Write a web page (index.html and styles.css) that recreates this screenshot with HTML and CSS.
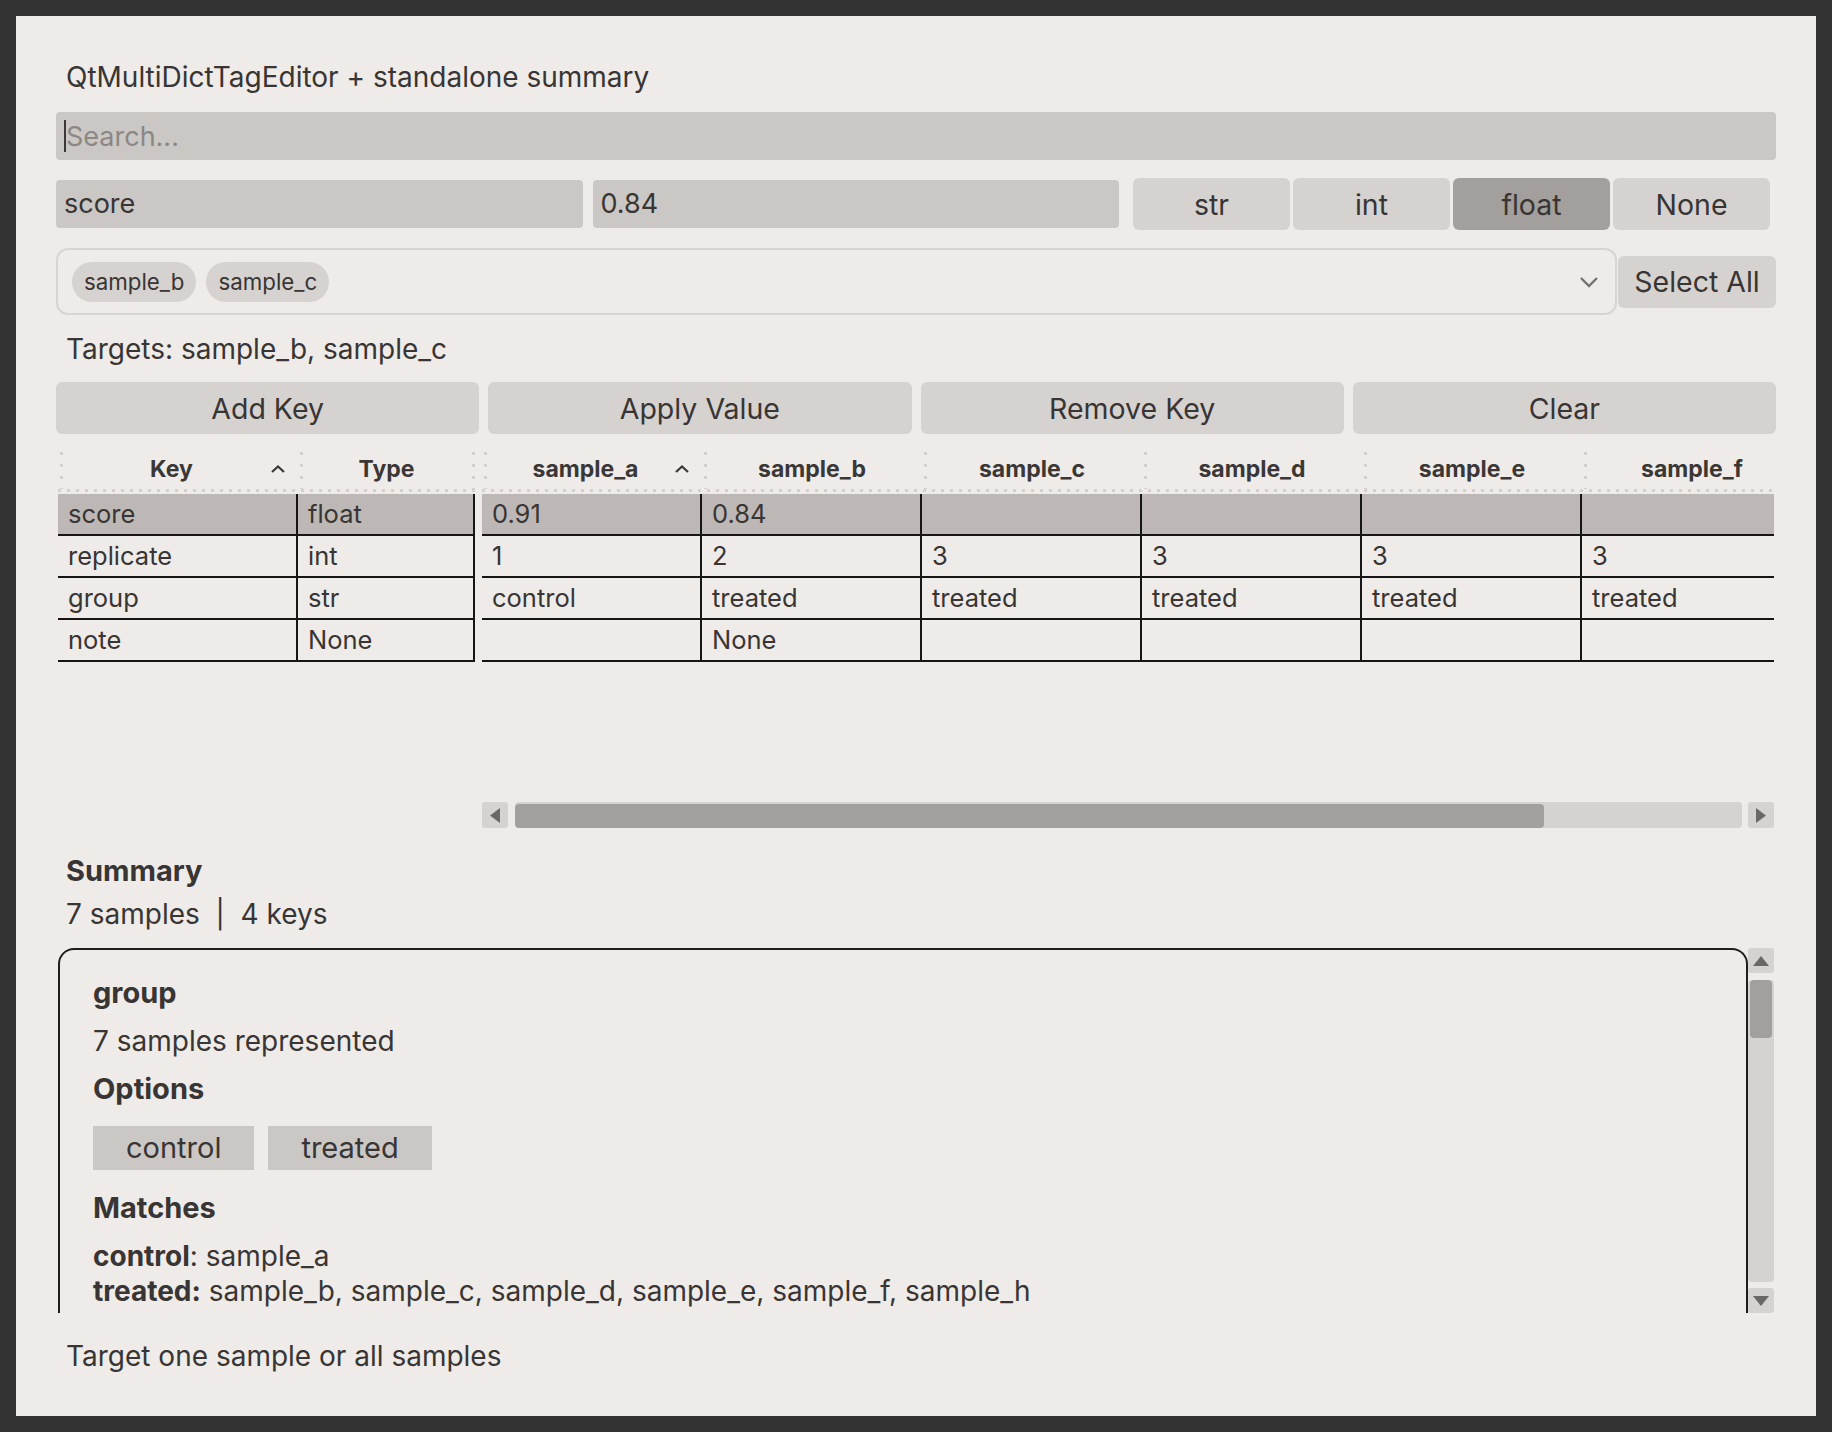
FILE: index.html
```html
<!DOCTYPE html>
<html lang="en">
<head>
    <meta charset="UTF-8">
    <title>QtMultiDictTagEditor</title>
    <link rel="stylesheet" href="styles.css">
</head>
<body>

<div class="window">

    <h1 class="title">QtMultiDictTagEditor + standalone summary</h1>

    <div class="search"><span class="caret"></span><span class="placeholder">Search...</span></div>

    <div class="edit-row">
        <div class="field">score</div>
        <div class="field">0.84</div>
        <div class="type-group">
            <button class="type-btn">str</button>
            <button class="type-btn">int</button>
            <button class="type-btn active">float</button>
            <button class="type-btn">None</button>
        </div>
    </div>

    <div class="target-row">
        <div class="combo">
            <span class="chip">sample_b</span>
            <span class="chip">sample_c</span>
            <svg class="chevron" viewBox="0 0 20 12"><polyline points="2,2 10,10 18,2" fill="none" stroke="#77726f" stroke-width="2.4"/></svg>
        </div>
        <button class="select-all">Select All</button>
    </div>

    <div class="targets">Targets: sample_b, sample_c</div>

    <div class="actions">
        <button>Add Key</button>
        <button>Apply Value</button>
        <button>Remove Key</button>
        <button>Clear</button>
    </div>

    <div class="grid">
        <div class="frozen">
            <div class="thead">
                <div class="th col-key sorted"><span class="label">Key</span><svg viewBox="0 0 14 8"><polyline points="1,7 7,1.5 13,7" fill="none" stroke="#3a3736" stroke-width="2.2"/></svg></div>
                <div class="th col-type last"><span class="label">Type</span></div>
            </div>
            <div class="tr selected"><div class="td col-key">score</div><div class="td col-type">float</div></div>
            <div class="tr"><div class="td col-key">replicate</div><div class="td col-type">int</div></div>
            <div class="tr"><div class="td col-key">group</div><div class="td col-type">str</div></div>
            <div class="tr"><div class="td col-key">note</div><div class="td col-type">None</div></div>
        </div>

        <div class="main">
            <div class="viewport">
                <div class="sheet">
                    <div class="thead">
                        <div class="th col-s sorted"><span class="label">sample_a</span><svg viewBox="0 0 14 8"><polyline points="1,7 7,1.5 13,7" fill="none" stroke="#3a3736" stroke-width="2.2"/></svg></div>
                        <div class="th col-s"><span class="label">sample_b</span></div>
                        <div class="th col-s"><span class="label">sample_c</span></div>
                        <div class="th col-s"><span class="label">sample_d</span></div>
                        <div class="th col-s"><span class="label">sample_e</span></div>
                        <div class="th col-s"><span class="label">sample_f</span></div>
                        <div class="th col-s"></div>
                    </div>
                    <div class="tr selected">
                        <div class="td col-s">0.91</div><div class="td col-s">0.84</div><div class="td col-s"></div>
                        <div class="td col-s"></div><div class="td col-s"></div><div class="td col-s"></div><div class="td col-s"></div>
                    </div>
                    <div class="tr">
                        <div class="td col-s">1</div><div class="td col-s">2</div><div class="td col-s">3</div>
                        <div class="td col-s">3</div><div class="td col-s">3</div><div class="td col-s">3</div><div class="td col-s"></div>
                    </div>
                    <div class="tr">
                        <div class="td col-s">control</div><div class="td col-s">treated</div><div class="td col-s">treated</div>
                        <div class="td col-s">treated</div><div class="td col-s">treated</div><div class="td col-s">treated</div><div class="td col-s"></div>
                    </div>
                    <div class="tr">
                        <div class="td col-s"></div><div class="td col-s">None</div><div class="td col-s"></div>
                        <div class="td col-s"></div><div class="td col-s"></div><div class="td col-s"></div><div class="td col-s"></div>
                    </div>
                </div>
            </div>
            <div class="hscroll">
                <div class="arrow"><svg width="10" height="15" viewBox="0 0 10 15"><polygon points="10,0 10,15 0,7.5" fill="#6b6765"/></svg></div>
                <div class="track"><div class="thumb" style="width: 83.9%"></div></div>
                <div class="arrow"><svg width="10" height="15" viewBox="0 0 10 15"><polygon points="0,0 0,15 10,7.5" fill="#6b6765"/></svg></div>
            </div>
        </div>
    </div>

    <div class="sum-title">Summary</div>
    <div class="counts">7 samples &nbsp;|&nbsp; 4 keys</div>

    <div class="sum-wrap">
        <div class="sum-box">
            <div class="sum-key">group</div>
            <div class="sum-line">7 samples represented</div>
            <div class="sum-head">Options</div>
            <div class="options">
                <span class="opt">control</span>
                <span class="opt">treated</span>
            </div>
            <div class="sum-head matches-head">Matches</div>
            <div class="matches">
                <div><b>control</b>: sample_a</div>
                <div><b>treated:</b> sample_b, sample_c, sample_d, sample_e, sample_f, sample_h</div>
            </div>
        </div>
        <div class="vscroll">
            <div class="arrow v"><svg width="16" height="10" viewBox="0 0 16 10"><polygon points="0,10 16,10 8,0" fill="#6b6765"/></svg></div>
            <div class="vtrack"><div class="vthumb"></div></div>
            <div class="arrow v down"><svg width="16" height="10" viewBox="0 0 16 10"><polygon points="0,0 16,0 8,10" fill="#6b6765"/></svg></div>
        </div>
    </div>

    <div class="footer">Target one sample or all samples</div>

</div>

</body>
</html>
```

FILE: styles.css
```css
* {
    box-sizing: border-box;
}

body {
    margin: 0;
    padding: 16px;
    background: #323232;
    font-family: Inter, "Noto Sans", sans-serif;
    color: #383534;
}

.window {
    width: 1800px;
    height: 1400px;
    background: #efebe8;
    padding: 45px 40px 0;
    font-size: 28px;
}

.title {
    margin: 0 0 0 10px;
    font-size: 28px;
    font-weight: normal;
    line-height: 32px;
}

.search {
    margin-top: 19px;
    height: 48px;
    background: #cbc7c4;
    border-radius: 4px;
    display: flex;
    align-items: center;
    padding-left: 8px;
    font-size: 27px;
}

.caret {
    width: 2px;
    height: 32px;
    background: #3a3736;
}

.placeholder {
    color: #8b8785;
}

.edit-row {
    margin-top: 18px;
    height: 52px;
    display: flex;
    align-items: center;
    gap: 10px;
}

.field {
    flex: 1;
    height: 48px;
    line-height: 48px;
    background: #cbc7c4;
    border-radius: 4px;
    padding-left: 8px;
    font-size: 27px;
}

button {
    font-family: inherit;
    font-size: 28.5px;
    color: #383534;
    border: none;
    background: #d6d2cf;
    border-radius: 6px;
    padding: 0;
}

.type-group {
    display: flex;
    gap: 3px;
    margin: 0 6px 0 4px;
}

.type-btn {
    width: 157px;
    height: 52px;
}

.type-btn.active {
    background: #a39f9c;
}

.target-row {
    margin-top: 18px;
    display: flex;
    align-items: center;
    gap: 1px;
}

.combo {
    flex: 1;
    height: 67px;
    border: 2px solid #d8d4d1;
    border-radius: 12px;
    display: flex;
    align-items: center;
    gap: 10px;
    padding: 0 16px 0 14px;
}

.chip {
    height: 40px;
    line-height: 40px;
    padding: 0 12px;
    border-radius: 20px;
    background: #d6d2cf;
    font-size: 22.3px;
}

.chevron {
    margin-left: auto;
    width: 20px;
    height: 12px;
}

.select-all {
    width: 158px;
    height: 52px;
}

.targets {
    margin: 18px 0 0 10px;
    line-height: 32px;
}

.actions {
    margin-top: 17px;
    display: flex;
    gap: 9px;
}

.actions button {
    flex: 1;
    height: 52px;
}

/* table */

.grid {
    margin: 18px 2px 0;
    display: flex;
    gap: 7px;
}

.frozen {
    width: 417px;
    flex: none;
}

.main {
    flex: 1;
    min-width: 0;
}

.viewport {
    height: 350px;
    overflow: hidden;
}

.sheet {
    width: 1540px;
}

.thead {
    display: flex;
    height: 42px;
    background: linear-gradient(to right, #d4d0cd 3px, transparent 3px) 0 37px / 9px 3px repeat-x;
}

.th {
    height: 37px;
    padding-bottom: 4px;
    display: flex;
    align-items: center;
    font-weight: bold;
    font-size: 23px;
    color: #3a3736;
    background: linear-gradient(#d4d0cd 3px, transparent 3px) 2px 0 / 3px 12px repeat-y;
}

.th.last {
    background:
        linear-gradient(#d4d0cd 3px, transparent 3px) 2px 0 / 3px 12px repeat-y,
        linear-gradient(#d4d0cd 3px, transparent 3px) right 0 top 0 / 3px 12px repeat-y;
}

.th .label {
    flex: 1;
    text-align: center;
}

.th.sorted {
    padding-left: 14px;
}

.th svg {
    width: 14px;
    height: 8px;
    margin-right: 13px;
}

.col-key {
    width: 240px;
}

.col-type {
    width: 177px;
}

.col-s {
    width: 220px;
    flex: none;
}

.tr {
    display: flex;
    height: 42px;
}

.tr.selected {
    background: #bdb8b5;
}

.td {
    height: 42px;
    line-height: 40px;
    padding-left: 10px;
    font-size: 25.5px;
    white-space: nowrap;
    overflow: hidden;
    border-right: 2px solid #161616;
    border-bottom: 2px solid #161616;
}

.hscroll {
    height: 26px;
    display: flex;
}

.arrow {
    width: 26px;
    height: 26px;
    flex: none;
    background: #d6d2cf;
    border-radius: 3px;
    display: flex;
    align-items: center;
    justify-content: center;
}

.track {
    flex: 1;
    margin: 0 6px 0 7px;
    padding-top: 2px;
    background: #d6d2cf;
    border-radius: 4px;
}

.thumb {
    height: 100%;
    background: #a39f9c;
    border-radius: 4px;
}

/* summary */

.sum-title {
    margin: 27px 0 0 10px;
    line-height: 32px;
    font-weight: bold;
    font-size: 29px;
}

.counts {
    margin: 11px 0 0 10px;
    line-height: 32px;
}

.sum-wrap {
    margin: 18px 2px 0;
    height: 365px;
    display: flex;
}

.sum-box {
    flex: 1;
    border: 2px solid #1e1e1e;
    border-bottom: none;
    border-radius: 16px 16px 0 0;
    padding: 27px 0 0 33px;
    overflow: hidden;
}

.sum-key,
.sum-head {
    font-weight: bold;
    font-size: 29px;
    line-height: 32px;
}

.sum-line {
    margin-top: 16px;
    line-height: 32px;
}

.sum-head {
    margin-top: 16px;
}

.options {
    margin-top: 21px;
    display: flex;
    gap: 14px;
}

.opt {
    height: 44px;
    line-height: 44px;
    padding: 0 33px;
    background: #cbc7c4;
    font-size: 29px;
}

.matches-head {
    margin-top: 22px;
}

.matches {
    margin-top: 15px;
    line-height: 35px;
}

.vscroll {
    width: 26px;
    display: flex;
    flex-direction: column;
}

.arrow.v {
    height: 25px;
}

.vtrack {
    flex: 1;
    margin: 7px 0 6px;
    background: #d6d2cf;
    border-radius: 4px;
    padding: 0 2px;
}

.vthumb {
    height: 58px;
    background: #a39f9c;
    border-radius: 4px;
}

.footer {
    margin: 27px 0 0 10px;
    line-height: 32px;
}
```
